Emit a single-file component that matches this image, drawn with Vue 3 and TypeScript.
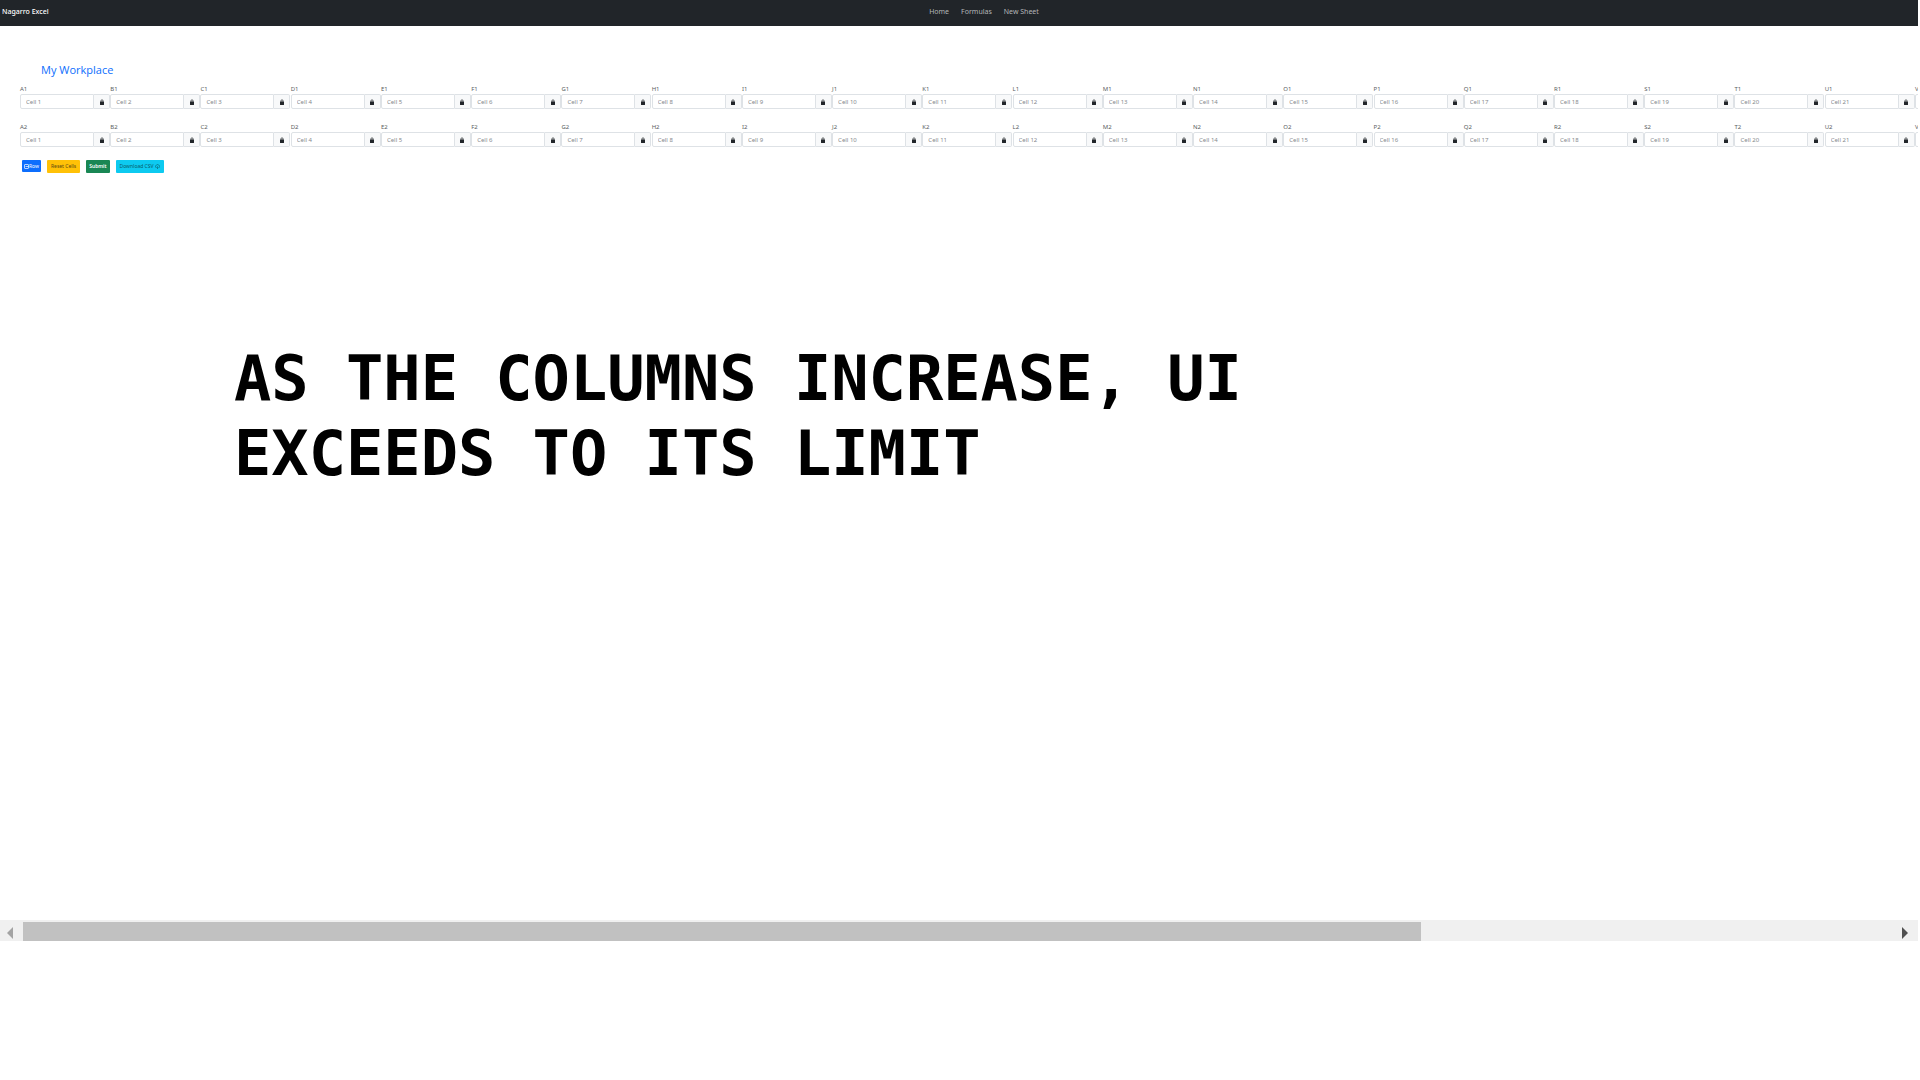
<script setup lang="ts">
import { ref } from 'vue'

const links = ['Home', 'Formulas', 'New Sheet']
const columns = 'ABCDEFGHIJKLMNOPQRSTUV'.split('')
const rows = ref([1, 2])
</script>

<template>
  <div class="page">
    <nav class="navbar">
      <a href="#" class="brand">Nagarro Excel</a>
      <div class="links">
        <a v-for="link in links" :key="link" href="#">{{ link }}</a>
      </div>
    </nav>

    <main class="sheet">
      <h1>My Workplace</h1>
      <div class="rows">
        <div v-for="row in rows" :key="row" class="row">
          <div v-for="(col, i) in columns" :key="col" class="cell">
            <label :for="`${col}${row}`">{{ col }}{{ row }}</label>
            <div class="group">
              <input :id="`${col}${row}`" type="text" :placeholder="`Cell ${i + 1}`" />
              <button type="button" class="lock" :aria-label="`Lock ${col}${row}`">
                <svg viewBox="0 0 8 12" width="4" height="6">
                  <path d="M2 6V3.500a2 2 0 0 1 4 0V6" fill="none" stroke="#212529" stroke-width="1.4" />
                  <rect x="0" y="5" width="8" height="7" rx="1" fill="#212529" />
                </svg>
              </button>
            </div>
          </div>
        </div>
      </div>
      <div class="actions">
        <button type="button" class="btn primary">
          <svg viewBox="0 0 10 10" width="5" height="5" fill="none" stroke="#fff" stroke-width="1.4">
            <rect x="1" y="1" width="8" height="8" rx="1" />
            <path d="M3 5h6" />
          </svg>Row
        </button>
        <button type="button" class="btn warning">Reset Cells</button>
        <button type="button" class="btn success">Submit</button>
        <button type="button" class="btn info">
          Download CSV
          <svg viewBox="0 0 10 10" width="5" height="5" fill="none" stroke="#0a5a68" stroke-width="1.2">
            <path d="M3 7a2 2 0 0 1-.5-4A2.800 2.800 0 0 1 7.800 3a2 2 0 0 1-.5 4M5 4.500V9M3.500 7.500L5 9l1.500-1.500" />
          </svg>
        </button>
      </div>
    </main>

    <p class="note">AS THE COLUMNS INCREASE, UI EXCEEDS TO ITS LIMIT</p>

    <div class="scrollbar">
      <button type="button" class="arrow" aria-label="Scroll left">
        <svg viewBox="0 0 6 12" width="6" height="12"><path d="M6 0v12L0 6z" fill="#a3a3a3" /></svg>
      </button>
      <div class="track"><div class="thumb"></div></div>
      <button type="button" class="arrow" aria-label="Scroll right">
        <svg viewBox="0 0 6 12" width="6" height="12"><path d="M0 0v12l6-6z" fill="#505050" /></svg>
      </button>
    </div>
  </div>
</template>

<style>
body {
  margin: 0;
  background: #fff;
}
</style>

<style scoped>
.page {
  font-family: "Noto Sans", sans-serif;
  color: #212529;
  margin-right: 2px;
  overflow: hidden;
}

button {
  font-family: inherit;
  padding: 0;
  margin: 0;
  border: 0;
}

.navbar {
  display: grid;
  grid-template-columns: 1fr auto 1fr;
  height: 26px;
  box-sizing: border-box;
  padding: 5px 2px 0;
  background: #212529;
  font-size: 7px;
  line-height: 14px;
}

.navbar a {
  text-decoration: none;
  color: #b4b6b8;
}

.navbar .brand {
  color: #fff;
  font-weight: 500;
}

.links {
  display: flex;
  gap: 12px;
  padding-left: 50px;
}

.sheet {
  padding: 36px 0 0 20px;
}

h1 {
  margin: 0 0 8px 21px;
  font-family: "Open Sans", "Noto Sans", sans-serif;
  font-size: 11px;
  line-height: 16px;
  font-weight: 400;
  color: #0d6efd;
}

.rows {
  display: flex;
  flex-direction: column;
  gap: 15px;
}

.row {
  display: flex;
}

.cell {
  flex: 0 0 4.755%;
}

.cell label {
  display: block;
  height: 8px;
  font-size: 6px;
  line-height: 6px;
  color: #5a5e62;
}

.group {
  display: flex;
  height: 15px;
}

.group input {
  box-sizing: border-box;
  width: 74px;
  padding: 0 5px;
  border: 1px solid #dee2e6;
  border-radius: 2px 0 0 2px;
  font-family: inherit;
  font-size: 6px;
  color: #212529;
}

.group input::placeholder {
  color: #85898d;
}

.lock {
  box-sizing: border-box;
  display: flex;
  align-items: center;
  justify-content: center;
  width: 16px;
  border: 1px solid #dee2e6;
  border-left: 0;
  border-radius: 0 2px 2px 0;
  background: #f8f9fa;
}

.actions {
  display: flex;
  gap: 6px;
  margin-top: 13px;
  padding-left: 2px;
}

.btn {
  display: flex;
  align-items: center;
  justify-content: center;
  gap: 1px;
  height: 13px;
  padding: 0 4px;
  border-radius: 1px;
  font-size: 5px;
  line-height: 13px;
}

.primary {
  gap: 0;
  height: 12px;
  padding: 0 2px;
  background: #0d6efd;
  color: #fff;
}

.warning {
  background: #ffc107;
  color: #5c4a12;
}

.success {
  padding: 0 3px;
  background: #198754;
  color: #fff;
  font-weight: 600;
}

.info {
  background: #0dcaf0;
  color: #0a5a68;
}

.note {
  max-width: 1040px;
  margin: 168px 0 0 234px;
  font-family: "DejaVu Sans Mono", monospace;
  font-size: 62px;
  line-height: 75px;
  font-weight: 700;
  color: #000;
}

.scrollbar {
  display: flex;
  height: 21px;
  margin-top: 429px;
  background: #f0f0f0;
}

.arrow {
  box-sizing: border-box;
  display: flex;
  align-items: center;
  justify-content: center;
  width: 23px;
  padding: 4px 3px 0 0;
  background: transparent;
}

.track {
  flex: 1;
  padding-top: 2px;
}

.thumb {
  width: 74.7%;
  height: 19px;
  background: #c1c1c1;
}
</style>
